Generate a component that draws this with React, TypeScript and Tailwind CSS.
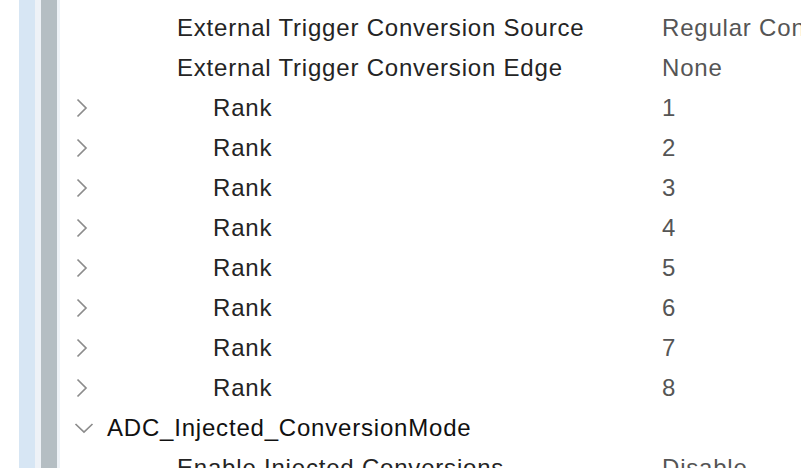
import React from "react";

const Right = () => (
  <svg width="16" height="20" viewBox="0 0 16 20" className="block">
    <path d="M3.5 1.5 L12 10 L3.5 18.5" fill="none" stroke="#8c8c8c" strokeWidth="1.7" />
  </svg>
);
const Down = () => (
  <svg width="20" height="16" viewBox="0 0 20 16" className="block">
    <path d="M1.5 4 L10 12 L18.5 4" fill="none" stroke="#8c8c8c" strokeWidth="1.7" />
  </svg>
);

type Row = { label: string; value?: string; indent: number; icon?: "r" | "d"; dark?: boolean };

const rows: Row[] = [
  { label: "External Trigger Conversion Source", value: "Regular Conversion launched by software", indent: 177 },
  { label: "External Trigger Conversion Edge", value: "None", indent: 177 },
  ...[1, 2, 3, 4, 5, 6, 7, 8].map((n) => ({ label: "Rank", value: String(n), indent: 213, icon: "r" as const })),
  { label: "ADC_Injected_ConversionMode", indent: 107, icon: "d", dark: true },
  { label: "Enable Injected Conversions", value: "Disable", indent: 177 },
];

export default function App() {
  return (
    <div className="w-[801px] h-[468px] overflow-hidden bg-white flex font-['Liberation_Sans',Arial,sans-serif]">
      <div className="w-[19px] shrink-0 bg-white" />
      <div className="w-[16px] shrink-0 bg-[#d7e6f4]" />
      <div className="w-[6px] shrink-0 bg-[#eef2f7]" />
      <div className="w-[16px] shrink-0 bg-[#b5bec3]" />
      <div className="w-[3px] shrink-0 bg-[#eef2f7]" />
      <div className="flex-1 min-w-0 pt-[8px] flex flex-col">
        {rows.map((r, i) => (
          <div key={i} className="h-[40px] shrink-0 flex items-center text-[24px] tracking-[0.8px] whitespace-nowrap relative">
            {r.icon && (
              <div className="absolute left-[14px] top-0 h-full flex items-center">
                {r.icon === "r" ? <Right /> : <Down />}
              </div>
            )}
            <div
              className={r.dark ? "w-[602px] shrink-0 text-[#111111]" : "w-[602px] shrink-0 text-[#242424]"}
              style={{ paddingLeft: r.indent - 60 }}
            >
              {r.label}
            </div>
            {r.value && <div className="text-[#555555]">{r.value}</div>}
          </div>
        ))}
      </div>
    </div>
  );
}
